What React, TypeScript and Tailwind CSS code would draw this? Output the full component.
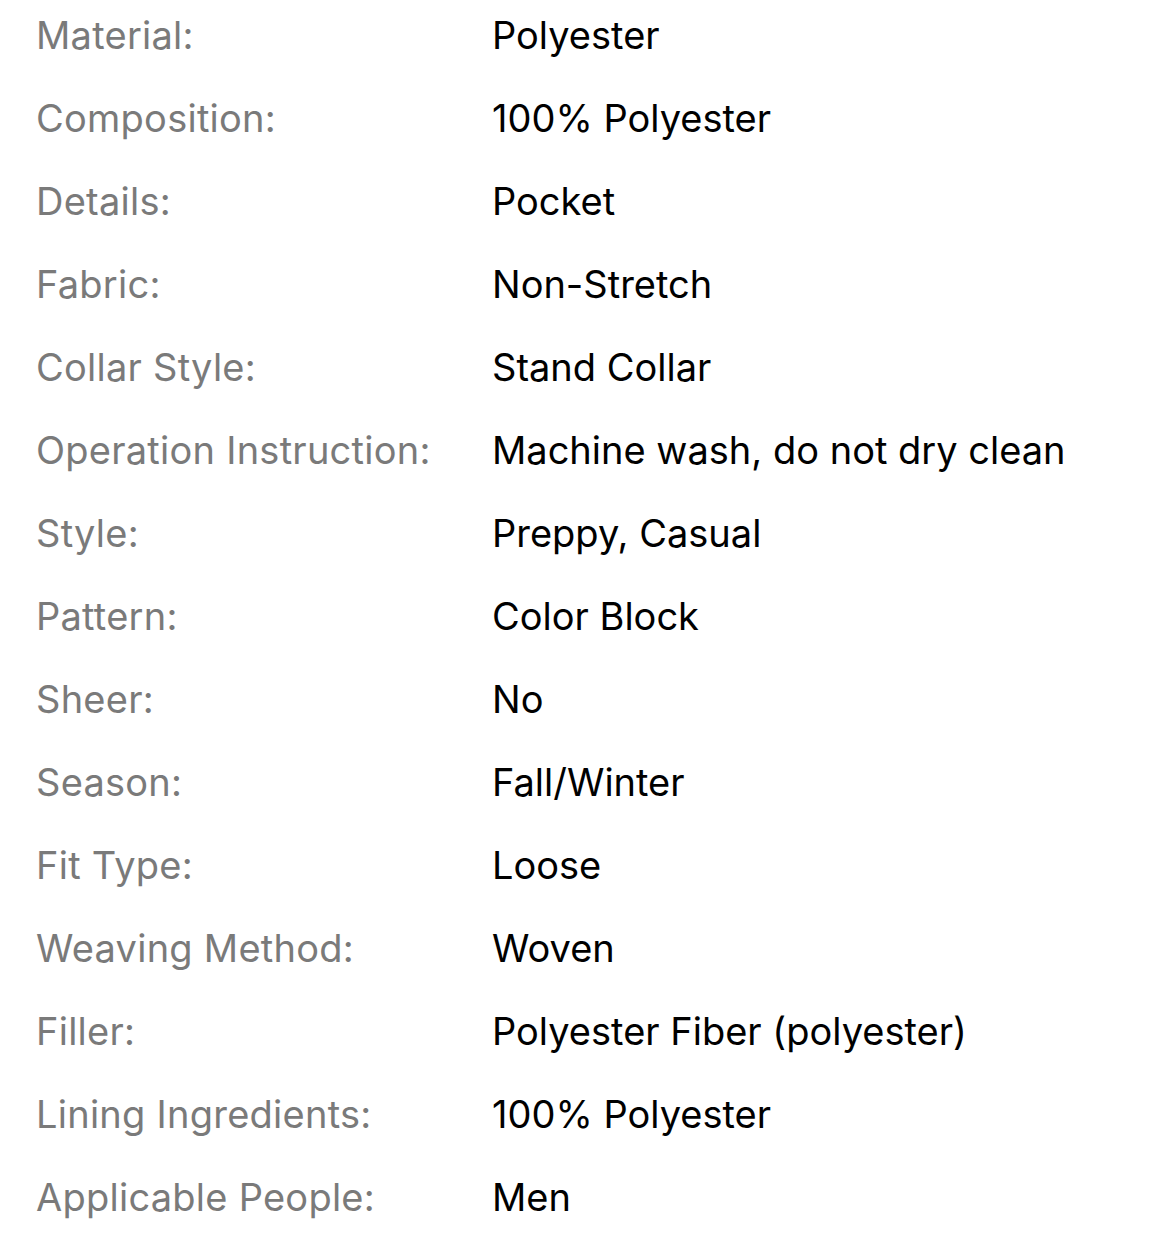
const specs: [string, string][] = [
  ["Material:", "Polyester"],
  ["Composition:", "100% Polyester"],
  ["Details:", "Pocket"],
  ["Fabric:", "Non-Stretch"],
  ["Collar Style:", "Stand Collar"],
  ["Operation Instruction:", "Machine wash, do not dry clean"],
  ["Style:", "Preppy, Casual"],
  ["Pattern:", "Color Block"],
  ["Sheer:", "No"],
  ["Season:", "Fall/Winter"],
  ["Fit Type:", "Loose"],
  ["Weaving Method:", "Woven"],
  ["Filler:", "Polyester Fiber (polyester)"],
  ["Lining Ingredients:", "100% Polyester"],
  ["Applicable People:", "Men"],
];

export default function App() {
  return (
    <div className="min-h-screen bg-white pl-[36px]" style={{ fontFamily: "Inter, 'Noto Sans', sans-serif" }}>
      <div className="flex flex-col gap-[13px]">
        {specs.map(([label, value]) => (
          <div key={label} className="flex h-[70px] items-center text-[38px]">
            <span className="w-[456px] shrink-0 tracking-[0.25px] text-[#7a7a7a]">{label}</span>
            <span className="text-black">{value}</span>
          </div>
        ))}
      </div>
    </div>
  );
}
